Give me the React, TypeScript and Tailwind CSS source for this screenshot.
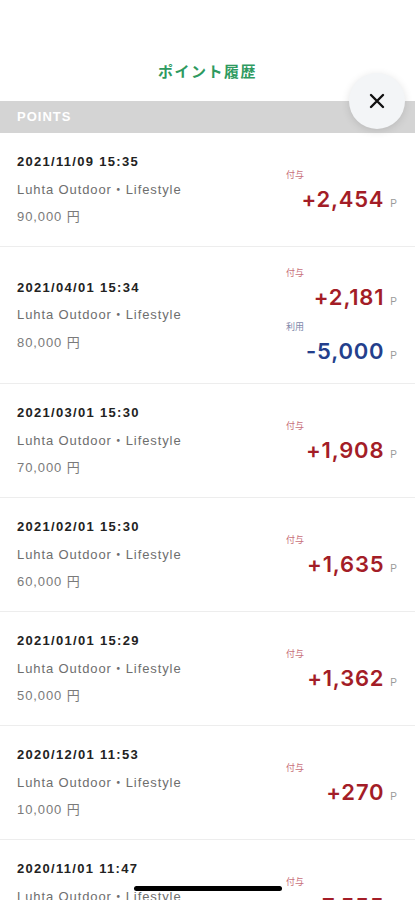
import React from "react";

type Entry = { label: "付与" | "利用"; amount: string };
type Row = { date: string; price: string; entries: Entry[] };

const rows: Row[] = [
  { date: "2021/11/09 15:35", price: "90,000 円", entries: [{ label: "付与", amount: "+2,454" }] },
  {
    date: "2021/04/01 15:34",
    price: "80,000 円",
    entries: [
      { label: "付与", amount: "+2,181" },
      { label: "利用", amount: "-5,000" },
    ],
  },
  { date: "2021/03/01 15:30", price: "70,000 円", entries: [{ label: "付与", amount: "+1,908" }] },
  { date: "2021/02/01 15:30", price: "60,000 円", entries: [{ label: "付与", amount: "+1,635" }] },
  { date: "2021/01/01 15:29", price: "50,000 円", entries: [{ label: "付与", amount: "+1,362" }] },
  { date: "2020/12/01 11:53", price: "10,000 円", entries: [{ label: "付与", amount: "+270" }] },
  { date: "2020/11/01 11:47", price: "40,000 円", entries: [{ label: "付与", amount: "+7,555" }] },
];

const font = { fontFamily: '"Liberation Sans", "Noto Sans CJK JP", sans-serif' };
const amountFont = { fontFamily: 'Inter, "Liberation Sans", sans-serif' };

function EntryBlock({ e, first }: { e: Entry; first: boolean }) {
  const plus = e.label === "付与";
  return (
    <div className={first ? "" : "mt-[10px]"}>
      <div
        className={
          "h-[14px] leading-[14px] text-[9px] " + (plus ? "text-[#c8707a]" : "text-[#7d88aa]")
        }
      >
        {e.label}
      </div>
      <div className="mt-[4px] flex h-[26px] items-baseline justify-end leading-[26px]">
        <span
          className={
            "text-[22px] font-semibold tracking-[0.8px] " + (plus ? "text-[#a31d27]" : "text-[#243f8c]")
          }
          style={amountFont}
        >
          {e.amount}
        </span>
        <span className="ml-[6px] text-[10px] text-[#9a9a9a]">P</span>
      </div>
    </div>
  );
}

export default function App() {
  return (
    <div className="relative h-[900px] w-[415px] overflow-hidden bg-white" style={font}>
      <div className="h-[101px] pt-[62px]">
        <div className="text-center text-[15px] font-bold leading-[20px] tracking-[1.5px] text-[#2e9a60]">
          ポイント履歴
        </div>
      </div>
      <div className="flex h-[32px] items-center bg-[#d4d4d4] pl-[17px]">
        <span className="text-[13px] font-bold tracking-[1px] text-white">POINTS</span>
      </div>

      <div>
        {rows.map((r, i) => (
          <div key={i} className="flex items-center border-b border-[#ededed] py-[19px] pl-[17px] pr-[18px]">
            <div className="flex flex-1 flex-col gap-[7.5px]">
              <div className="h-[20px] text-[13px] font-bold leading-[20px] tracking-[1.3px] text-[#222]">
                {r.date}
              </div>
              <div className="h-[20px] text-[13px] leading-[20px] tracking-[0.9px] text-[#6e6e6e]">
                Luhta Outdoor・Lifestyle
              </div>
              <div className="h-[20px] text-[13px] leading-[20px] tracking-[0.9px] text-[#7a7a7a]">
                {r.price}
              </div>
            </div>
            <div className="w-[111px]">
              {r.entries.map((e, j) => (
                <EntryBlock key={j} e={e} first={j === 0} />
              ))}
            </div>
          </div>
        ))}
      </div>

      <button className="absolute right-[10px] top-[73px] flex h-[56px] w-[56px] items-center justify-center rounded-full bg-[#f3f5f7] shadow-[0_2px_8px_rgba(0,0,0,0.12)]">
        <svg width="16" height="16" viewBox="0 0 16 16" fill="none" stroke="#111" strokeWidth="2.4" strokeLinecap="round">
          <path d="M2 2 L14 14 M14 2 L2 14" />
        </svg>
      </button>

      <div className="absolute left-[134px] top-[886px] h-[5px] w-[148px] rounded-full bg-black" />
    </div>
  );
}
